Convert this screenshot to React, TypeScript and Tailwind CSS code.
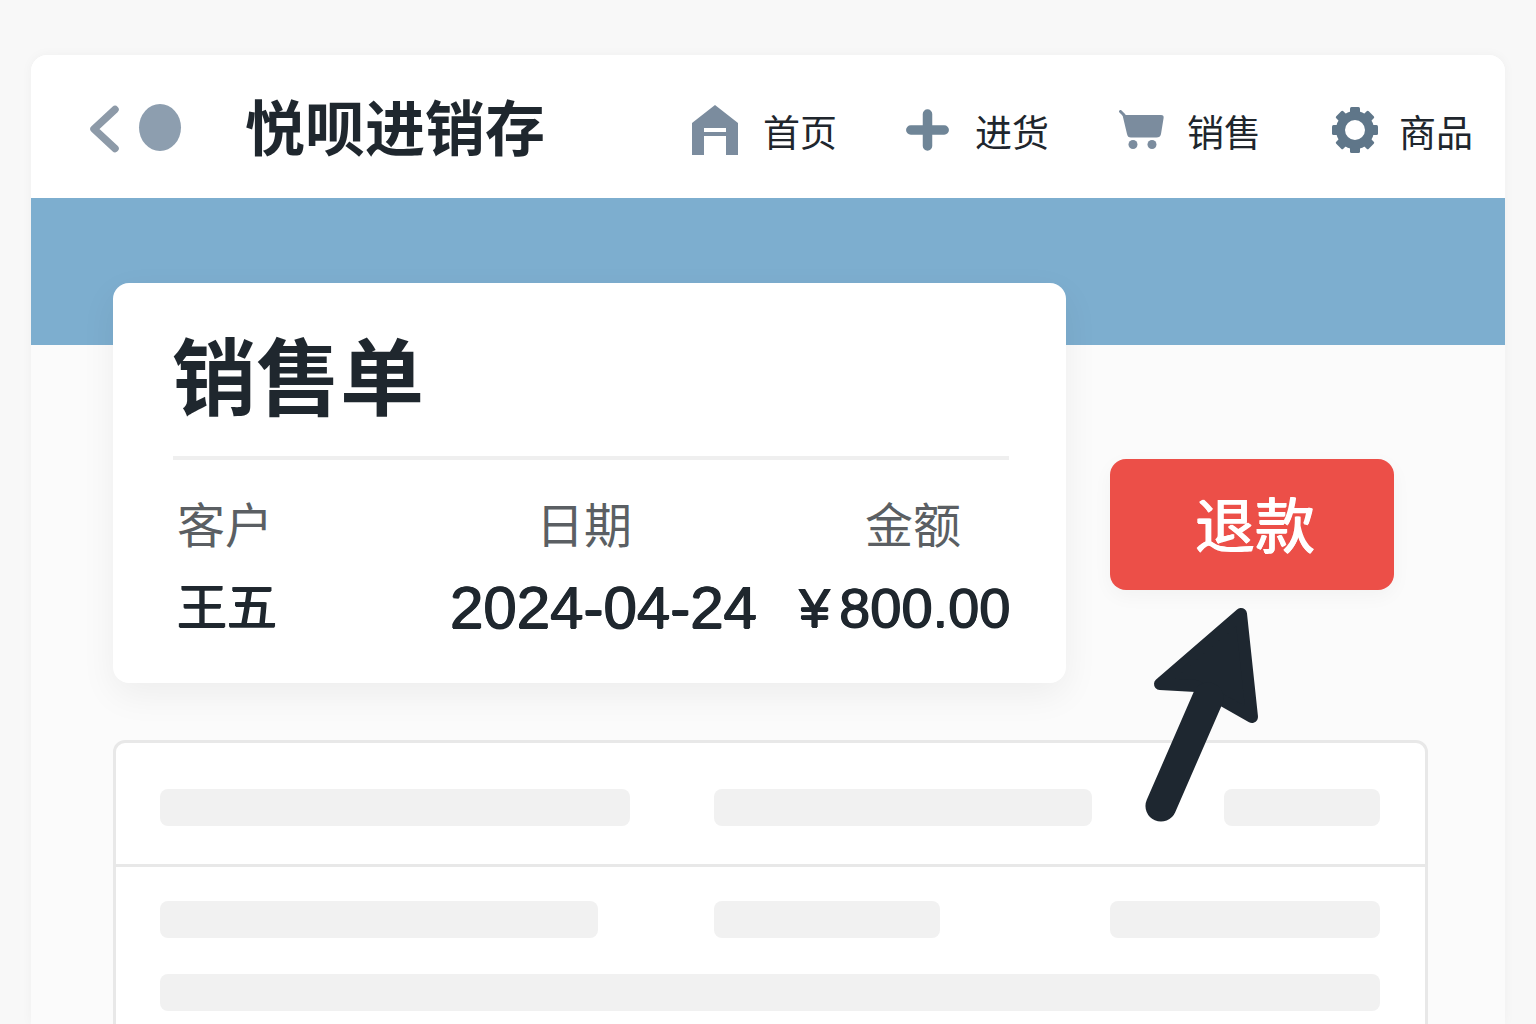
const sans = "font-['Liberation_Sans','Noto_Sans_CJK_SC',sans-serif]";

function HouseIcon() {
  return (
    <svg width="46" height="50" viewBox="0 0 46 50">
      <path fill="#7b8c9e" fillRule="evenodd" d="M23 0 46 18V50H34V31H12V50H0V18ZM12 23V27H34V23Z" />
    </svg>
  );
}

function PlusIcon() {
  return (
    <svg width="43" height="42" viewBox="0 0 43 42">
      <path stroke="#6f8597" strokeWidth="9.5" strokeLinecap="round" d="M21.5 5V37M4.8 21H38.2" />
    </svg>
  );
}

function CartIcon() {
  return (
    <svg width="45" height="40" viewBox="0 0 45 40">
      <path fill="none" stroke="#7b8c9e" strokeWidth="3" strokeLinecap="round" d="M1.5 1.5 5 5" />
      <path fill="#7b8c9e" d="M3.5 5H42C44 5 45 6 44.6 8L42 24C41.6 26.5 40 27.5 37.5 27.5H12C9.5 27.5 8.5 26.5 8 24Z" />
      <circle cx="14" cy="34.5" r="4.5" fill="#7b8c9e" />
      <circle cx="33" cy="34.5" r="4.5" fill="#7b8c9e" />
    </svg>
  );
}

function GearIcon() {
  const teeth = [0, 45, 90, 135, 180, 225, 270, 315];
  return (
    <svg width="46" height="46" viewBox="0 0 46 46">
      {teeth.map((deg) => (
        <rect key={deg} x="18" y="0" width="10" height="12" rx="1.5" fill="#5f7689" transform={`rotate(${deg} 23 23)`} />
      ))}
      <circle cx="23" cy="23" r="14.5" fill="none" stroke="#5f7689" strokeWidth="9" />
    </svg>
  );
}

function NavItem({ icon, label, className }: { icon: React.ReactNode; label: string; className: string }) {
  return (
    <div className={`flex items-center ${className}`}>
      {icon}
      <span className="pt-[10px] text-[37px] leading-none text-[#20262d]">{label}</span>
    </div>
  );
}

function Bar({ className }: { className: string }) {
  return <div className={`h-[37px] rounded-lg bg-[#f1f1f1] ${className}`} />;
}

export default function App() {
  return (
    <div className={`relative h-[1024px] w-[1536px] overflow-hidden bg-[#f8f8f8] pt-[55px] pl-[31px] ${sans}`}>
      <div className="h-[969px] w-[1474px] rounded-t-2xl bg-[#fbfbfb] shadow-[0_0_12px_rgba(0,0,0,0.04)]">
        {/* Header */}
        <header className="flex h-[143px] items-center rounded-t-2xl bg-white">
          <svg className="mt-[4px] ml-[58px]" width="32" height="48" viewBox="0 0 32 48">
            <path fill="none" stroke="#8d9aa8" strokeWidth="7.5" strokeLinecap="round" strokeLinejoin="round" d="M26 4.5 5 24 26 43.5" />
          </svg>
          <div className="mt-[2px] ml-[18px] h-[47px] w-[42px] rounded-[50%] bg-[#8d9eaf]" />
          <h1 className="mt-[8px] ml-[64px] text-[60px] leading-none font-bold text-[#1f272e]">悦呗进销存</h1>
          <nav className="mt-[6px] ml-[147px] flex items-center">
            <NavItem icon={<HouseIcon />} label="首页" className="gap-[25px]" />
            <NavItem icon={<PlusIcon />} label="进货" className="ml-[69px] gap-[26px]" />
            <NavItem icon={<CartIcon />} label="销售" className="ml-[70px] gap-[23px]" />
            <NavItem icon={<GearIcon />} label="商品" className="ml-[71px] gap-[21px]" />
          </nav>
        </header>

        {/* Blue band */}
        <div className="h-[147px] bg-[#7daecf]" />

        {/* Order card and refund button */}
        <div className="relative mt-[-62px] flex items-start pl-[82px]">
          <section className="h-[400px] w-[953px] rounded-2xl bg-white px-[60px] pt-[52px] shadow-[0_12px_36px_rgba(0,0,0,0.06)]">
            <h2 className="-ml-[1px] text-[84px] leading-[90px] font-bold text-[#1f272e]">销售单</h2>
            <div className="mt-[31px] h-[4px] w-[836px] bg-[#efefef]" />
            <div className="mt-[43px] grid w-[860px] grid-cols-[277px_349px_1fr] pl-[4px] text-[48px] leading-none text-[#5b5f63]">
              <span>客户</span>
              <span className="pl-[82px]">日期</span>
              <span className="pl-[62px]">金额</span>
            </div>
            <div className="mt-[32px] grid w-[860px] grid-cols-[273px_349px_1fr] pl-[4px] text-[50px] leading-none text-[#1f272e] [text-shadow:0.7px_0_0_#1f272e,-0.7px_0_0_#1f272e,0_0.7px_0_#1f272e]">
              <span>王五</span>
              <span className="text-[60px] leading-[50px]">2024-04-24</span>
              <span className="flex items-center whitespace-nowrap">
                <span className="mr-[9px] text-[56px] leading-[50px]">¥</span>
                <span className="text-[56px] leading-[50px]">800.00</span>
              </span>
            </div>
          </section>
          <button className="mt-[176px] ml-[44px] h-[131px] w-[284px] rounded-2xl bg-[#ec4f48] pt-[6px] pl-[6px] text-[60px] leading-none text-white shadow-[0_6px_20px_rgba(0,0,0,0.04)] [text-shadow:0.8px_0_0_#ffffff,-0.8px_0_0_#ffffff,0_0.6px_0_#ffffff]">
            退款
          </button>
        </div>

        {/* Blurred table */}
        <div className="mt-[57px] ml-[82px] h-[400px] w-[1315px] rounded-t-xl border-[3px] border-[#e8e8e8] bg-white">
          <div className="flex h-[124px] items-start border-b-[3px] border-[#e8e8e8] pt-[46px] pl-[44px]">
            <Bar className="w-[470px]" />
            <Bar className="ml-[84px] w-[378px]" />
            <Bar className="ml-[132px] w-[156px]" />
          </div>
          <div className="flex flex-col gap-[36px] px-[44px] pt-[34px]">
            <div className="flex">
              <Bar className="w-[438px]" />
              <Bar className="ml-[116px] w-[226px]" />
              <Bar className="ml-[170px] w-[270px]" />
            </div>
            <Bar className="w-[1220px]" />
          </div>
        </div>
      </div>

      {/* Pointer arrow */}
      <svg className="absolute top-[600px] left-[1140px]" width="125" height="230" viewBox="0 0 125 230">
        <path
          fill="#1e2730"
          stroke="#1e2730"
          strokeWidth="12"
          strokeLinejoin="round"
          d="M101 14 20 84 56 86 82 100 112 117Z"
        />
        <path stroke="#1e2730" strokeWidth="31" strokeLinecap="round" d="M21 206 68 98" />
      </svg>
    </div>
  );
}
